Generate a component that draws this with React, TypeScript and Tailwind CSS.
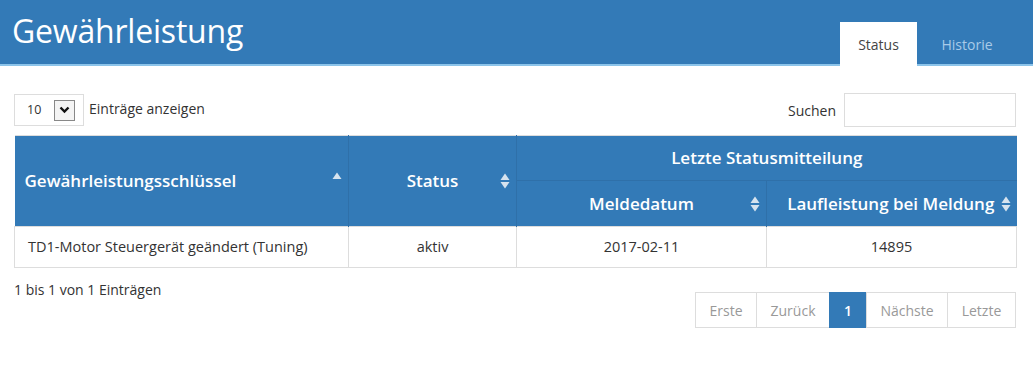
import React from 'react';

const font = { fontFamily: '"Open Sans", "Noto Sans", sans-serif' };

function SortBoth() {
    return (
        <svg className="absolute right-[6px] top-1/2 -translate-y-1/2 w-[10px] h-[16px]" viewBox="0 0 10 16">
            <path d="M5 0.5 L9.5 7 H0.5 Z" fill="#d6e3ef" />
            <path d="M5 15.5 L9.5 9 H0.5 Z" fill="#d6e3ef" />
        </svg>
    );
}

function SortAsc() {
    return (
        <svg className="absolute right-[6px] top-1/2 -translate-y-[9px] w-[10px] h-[16px]" viewBox="0 0 10 16">
            <path d="M5 0.5 L9.5 7 H0.5 Z" fill="#d6e3ef" />
        </svg>
    );
}

export default function App() {
    const pages = [
        { label: 'Erste', w: 'w-[62px]' },
        { label: 'Zurück', w: 'w-[74px]' },
        { label: '1', w: 'w-[38px]', active: true },
        { label: 'Nächste', w: 'w-[82px]' },
        { label: 'Letzte', w: 'w-[69px]' },
    ];

    return (
        <div className="w-[1033px] h-[386px] bg-white text-[#333]" style={font}>
            {/* header */}
            <div className="h-[66px] bg-[#337ab7] border-b-2 border-[#8cc4ea] flex items-end justify-between">
                <h1 className="self-start pl-[12px] pt-[10px] text-[32px] leading-[42px] text-white font-normal tracking-[-0.2px]">
                    Gewährleistung
                </h1>
                <div className="flex items-end mr-[16px] -mb-[2px]">
                    <div className="w-[77px] h-[44px] bg-white flex items-center justify-center text-[14px] text-[#444]">
                        Status
                    </div>
                    <div className="w-[100px] h-[44px] flex items-center justify-center text-[14px] text-[#a9cbe8]">
                        Historie
                    </div>
                </div>
            </div>

            <div className="px-[14px] pr-[17px]">
                {/* controls */}
                <div className="flex items-center justify-between pt-[27px] pb-[8px]">
                    <div className="flex items-center">
                        <div className="w-[70px] h-[32px] border border-[#ddd] flex items-center pl-[12px]">
                            <span className="text-[12.5px] w-[27px]">10</span>
                            <div className="w-[21px] h-[21px] border border-[#888] bg-[#f4f4f4] flex items-center justify-center">
                                <svg className="w-[11px] h-[8px]" viewBox="0 0 11 8">
                                    <path d="M1.5 1.5 L5.5 5.5 L9.5 1.5" fill="none" stroke="#111" strokeWidth={2.4} />
                                </svg>
                            </div>
                        </div>
                        <span className="ml-[5px] text-[14px] -mt-[3px]">Einträge anzeigen</span>
                    </div>
                    <div className="flex items-center">
                        <span className="text-[14px] mr-[8px]">Suchen</span>
                        <div className="w-[172px] h-[34px] border border-[#ddd]" />
                    </div>
                </div>

                {/* table */}
                <table className="w-[1002px] border-collapse table-fixed border-t border-[#ddd]">
                    <colgroup>
                        <col className="w-[334px]" />
                        <col className="w-[168px]" />
                        <col className="w-[250px]" />
                        <col className="w-[250px]" />
                    </colgroup>
                    <thead className="bg-[#337ab7] text-white text-[17px] font-semibold">
                        <tr className="h-[45px]">
                            <th rowSpan={2} className="relative text-left pl-[10px] font-semibold border-r border-[#2f70a9]">
                                Gewährleistungsschlüssel
                                <SortAsc />
                            </th>
                            <th rowSpan={2} className="relative text-center font-semibold border-r border-[#2f70a9]">
                                Status
                                <SortBoth />
                            </th>
                            <th colSpan={2} className="text-center font-semibold border-b border-[#2f70a9]">
                                Letzte Statusmitteilung
                            </th>
                        </tr>
                        <tr className="h-[46px]">
                            <th className="relative text-center font-semibold border-r border-[#2f70a9]">
                                Meldedatum
                                <SortBoth />
                            </th>
                            <th className="relative text-center font-semibold pr-[10px]">
                                <span className="pl-[8px]">Laufleistung bei Meldung</span>
                                <SortBoth />
                            </th>
                        </tr>
                    </thead>
                    <tbody className="text-[14.5px]">
                        <tr className="h-[41px]">
                            <td className="pl-[13px] border border-[#ddd]">TD1-Motor Steuergerät geändert (Tuning)</td>
                            <td className="text-center border border-[#ddd]">aktiv</td>
                            <td className="text-center border border-[#ddd]">2017-02-11</td>
                            <td className="text-center border border-[#ddd]">14895</td>
                        </tr>
                    </tbody>
                </table>

                {/* footer */}
                <div className="flex justify-between">
                    <div className="pt-[11px] text-[14px]">1 bis 1 von 1 Einträgen</div>
                    <div className="flex mt-[24px]">
                        {pages.map((p) => (
                            <div
                                key={p.label}
                                className={
                                    p.active
                                        ? `${p.w} h-[36px] -ml-px flex items-center justify-center bg-[#337ab7] text-white font-semibold text-[14px] border border-[#337ab7]`
                                        : `${p.w} h-[36px] -ml-px flex items-center justify-center text-[#999] text-[14px] border border-[#ddd]`
                                }
                            >
                                {p.label}
                            </div>
                        ))}
                    </div>
                </div>
            </div>
        </div>
    );
}
